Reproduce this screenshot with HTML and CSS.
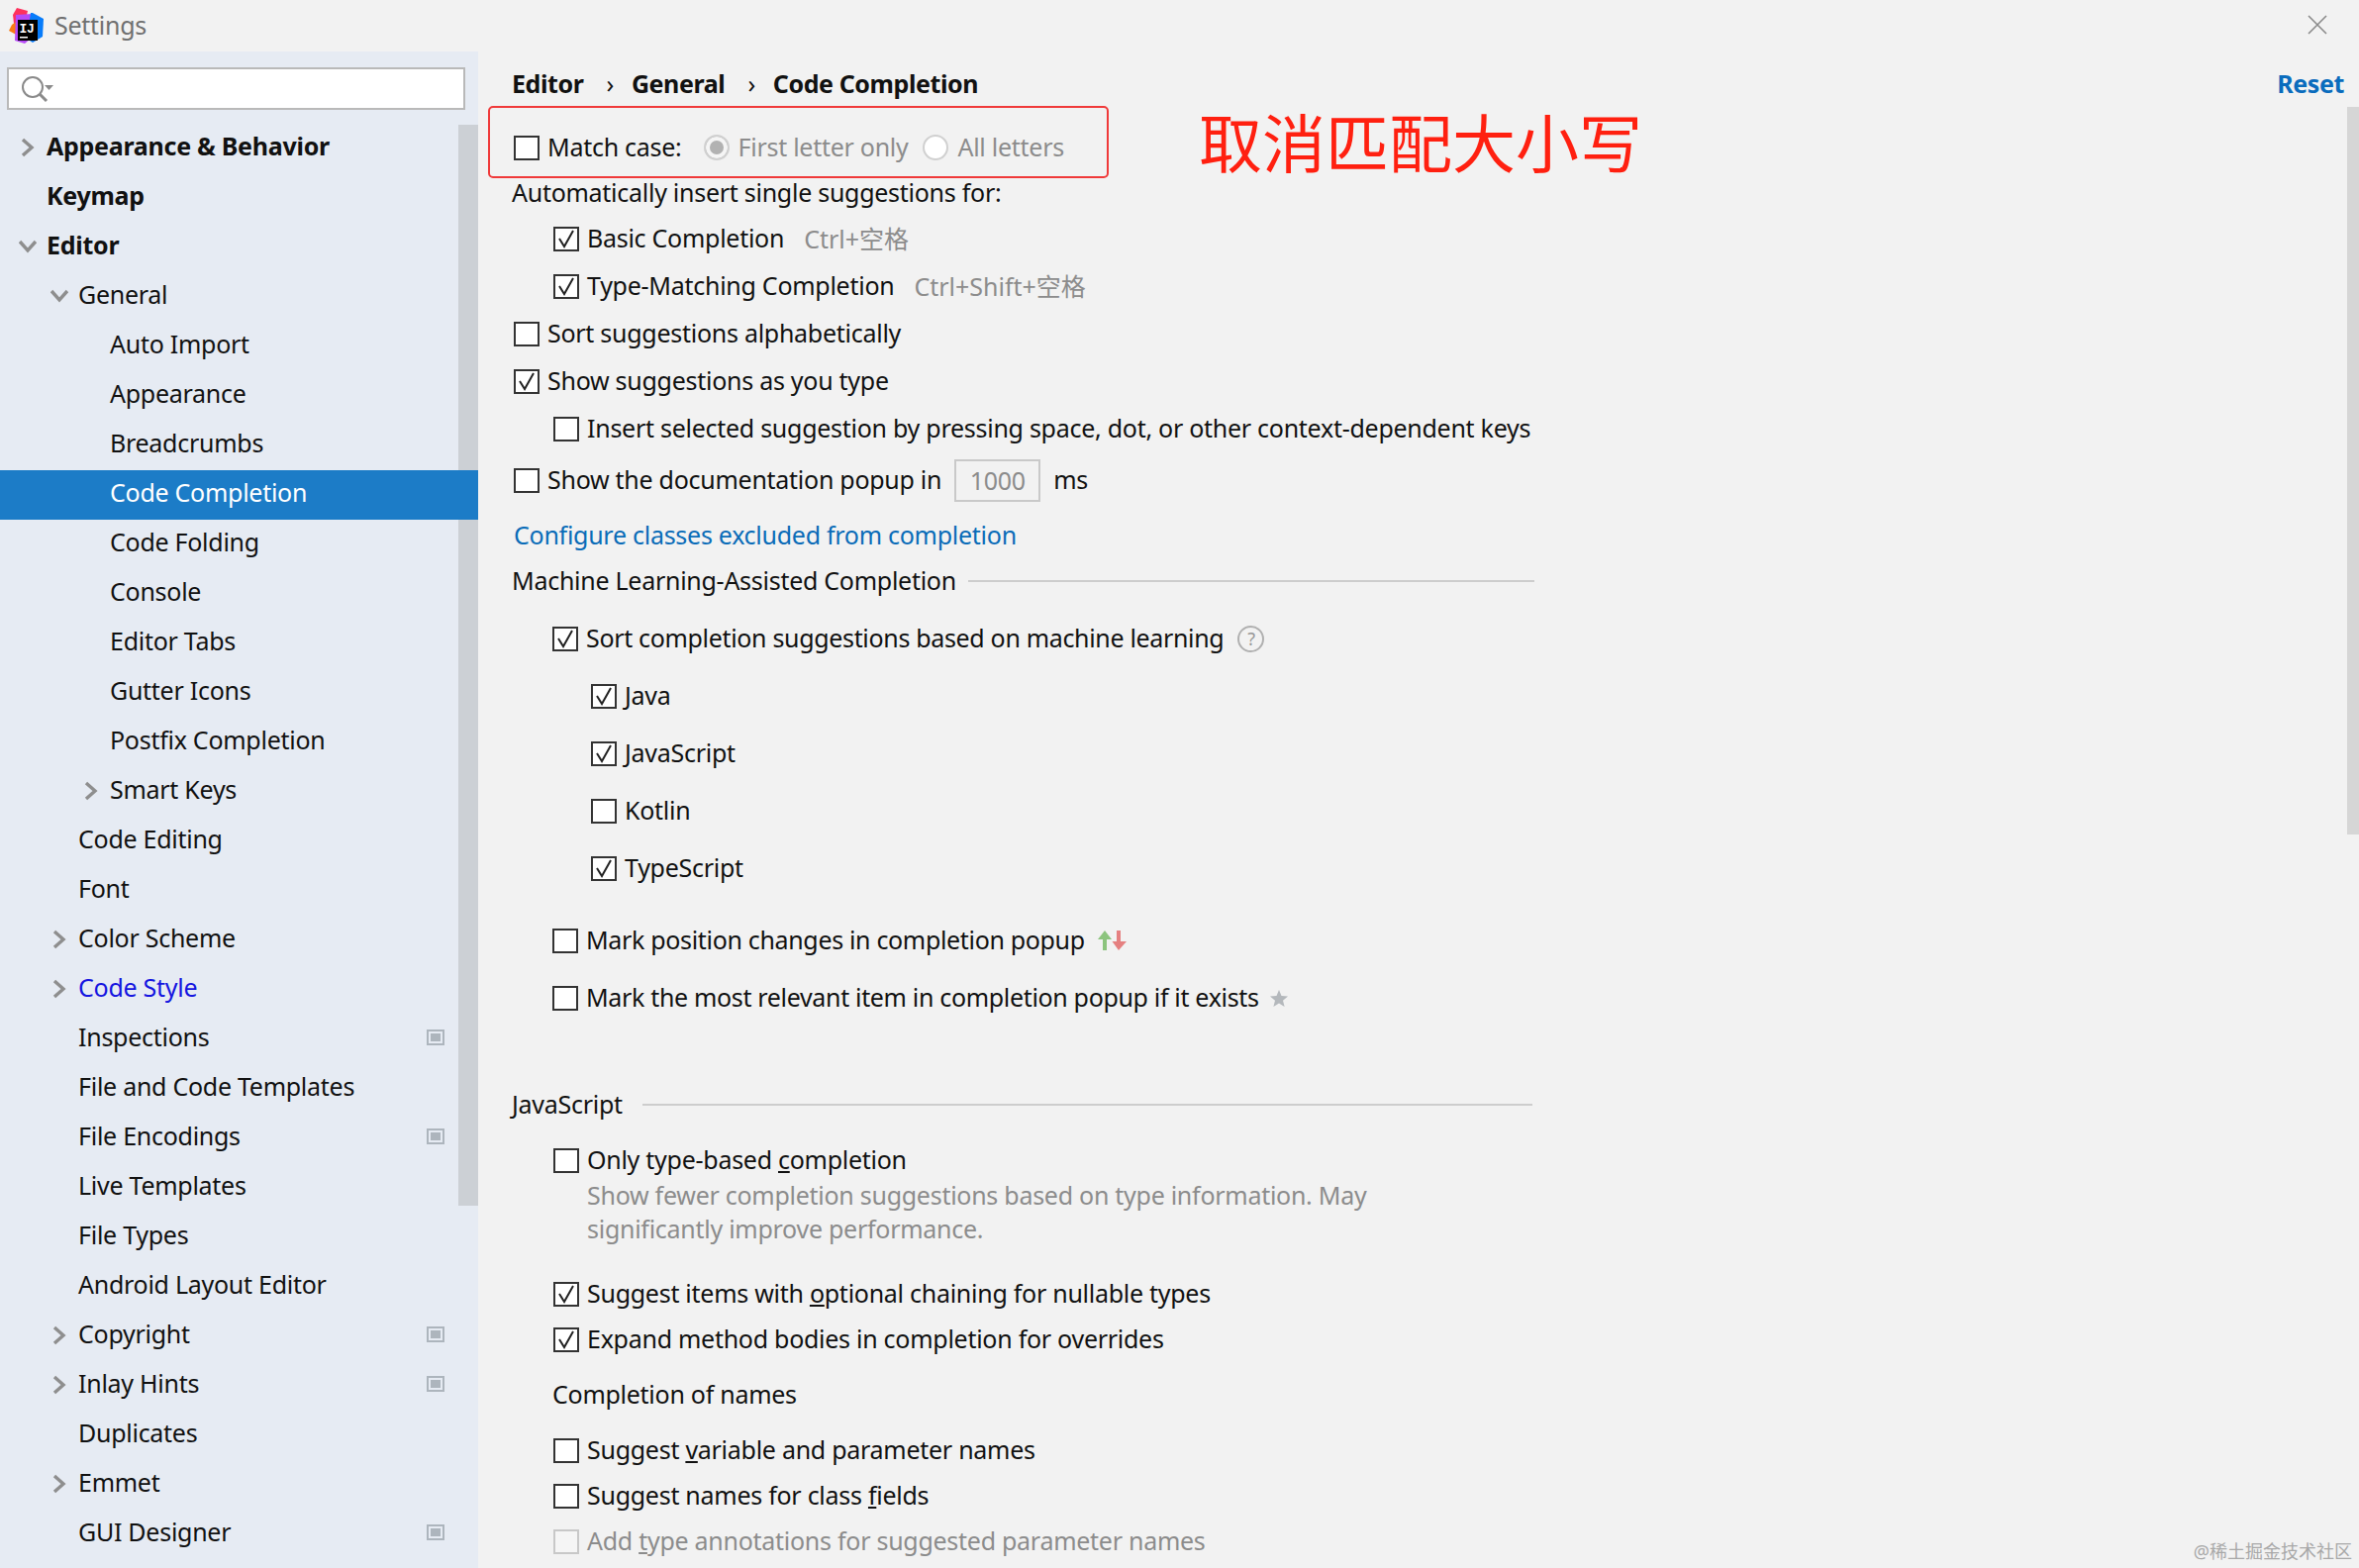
FILE: index.html
```html
<!DOCTYPE html>
<html lang="en">
<head>
  <meta charset="UTF-8">
  <title>Settings</title>
  <link rel="stylesheet" href="styles.css">
</head>
<body>

  <!-- Title bar -->
  <div class="titlebar">
    <svg class="logo" width="38" height="38" viewBox="0 0 38 38">
      <polygon points="10,9 14,2 25,5 21,22 12,26" fill="#fe315d"/>
      <polygon points="9,19 17,13 17,31 6,25" fill="#f97a12"/>
      <polygon points="13,10 30,9 34,29 22,39 12,36" fill="#b74af7" transform="translate(0,-1)"/>
      <polygon points="28,8 30,8 41,14 40,32 30,38 24,34" fill="#087cfa" transform="translate(0,-1)"/>
      <rect x="15" y="14" width="20" height="21" fill="#000"/>
      <rect x="17" y="31" width="8" height="1.5" fill="#fff"/>
      <text x="16.5" y="27" class="logo-text">IJ</text>
    </svg>
    <span class="title">Settings</span>
    <svg class="close" width="20" height="20" viewBox="0 0 20 20"><path d="M1 1L19 19M19 1L1 19" stroke="#8a8a8a" stroke-width="1.6" fill="none"/></svg>
  </div>

  <div class="layout">
    <!-- Left tree -->
    <div class="sidebar">
      <div class="search">
        <svg width="36" height="34" viewBox="0 0 36 34">
          <circle cx="14" cy="14" r="10" fill="none" stroke="#8a8a8a" stroke-width="2"/>
          <path d="M21 21L28 28" stroke="#8a8a8a" stroke-width="3"/>
          <polygon points="26,12 35,12 30.5,17" fill="#8a8a8a"/>
        </svg>
      </div>
      <div class="tree">
        <div class="node lvl0 bold"><svg class="arrow" width="14" height="20" viewBox="0 0 14 20"><path d="M2 2L11 10L2 18" class="chev"/></svg>Appearance &amp; Behavior</div>
        <div class="node lvl0 bold">Keymap</div>
        <div class="node lvl0 bold"><svg class="arrow down" width="18" height="14" viewBox="0 0 18 14"><path d="M1 2L9 11L17 2" class="chev"/></svg>Editor</div>
        <div class="node lvl1"><svg class="arrow down" width="18" height="14" viewBox="0 0 18 14"><path d="M1 2L9 11L17 2" class="chev"/></svg>General</div>
        <div class="node lvl2">Auto Import</div>
        <div class="node lvl2">Appearance</div>
        <div class="node lvl2">Breadcrumbs</div>
        <div class="node lvl2 selected">Code Completion</div>
        <div class="node lvl2">Code Folding</div>
        <div class="node lvl2">Console</div>
        <div class="node lvl2">Editor Tabs</div>
        <div class="node lvl2">Gutter Icons</div>
        <div class="node lvl2">Postfix Completion</div>
        <div class="node lvl2"><svg class="arrow" width="14" height="20" viewBox="0 0 14 20"><path d="M2 2L11 10L2 18" class="chev"/></svg>Smart Keys</div>
        <div class="node lvl1">Code Editing</div>
        <div class="node lvl1">Font</div>
        <div class="node lvl1"><svg class="arrow" width="14" height="20" viewBox="0 0 14 20"><path d="M2 2L11 10L2 18" class="chev"/></svg>Color Scheme</div>
        <div class="node lvl1 changed"><svg class="arrow" width="14" height="20" viewBox="0 0 14 20"><path d="M2 2L11 10L2 18" class="chev"/></svg>Code Style</div>
        <div class="node lvl1">Inspections<span class="scope"></span></div>
        <div class="node lvl1">File and Code Templates</div>
        <div class="node lvl1">File Encodings<span class="scope"></span></div>
        <div class="node lvl1">Live Templates</div>
        <div class="node lvl1">File Types</div>
        <div class="node lvl1">Android Layout Editor</div>
        <div class="node lvl1"><svg class="arrow" width="14" height="20" viewBox="0 0 14 20"><path d="M2 2L11 10L2 18" class="chev"/></svg>Copyright<span class="scope"></span></div>
        <div class="node lvl1"><svg class="arrow" width="14" height="20" viewBox="0 0 14 20"><path d="M2 2L11 10L2 18" class="chev"/></svg>Inlay Hints<span class="scope"></span></div>
        <div class="node lvl1">Duplicates</div>
        <div class="node lvl1"><svg class="arrow" width="14" height="20" viewBox="0 0 14 20"><path d="M2 2L11 10L2 18" class="chev"/></svg>Emmet</div>
        <div class="node lvl1">GUI Designer<span class="scope"></span></div>
      </div>
      <div class="tree-scroll"></div>
    </div>

    <!-- Right panel -->
    <div class="content">
      <div class="crumbs">
        <span>Editor</span><span class="sep">›</span><span>General</span><span class="sep">›</span><span>Code Completion</span>
        <a class="reset" href="#">Reset</a>
      </div>

      <div class="row"><span class="cb"></span>Match case:
        <span class="radio on"></span><span class="muted">First letter only</span>
        <span class="radio second"></span><span class="muted">All letters</span>
      </div>
      <div class="row plain short">Automatically insert single suggestions for:</div>
      <div class="row ind1"><span class="cb"><svg viewBox="0 0 22 21"><path d="M4 10L9 18L18 2"/></svg></span>Basic Completion<span class="shortcut">Ctrl+空格</span></div>
      <div class="row ind1"><span class="cb"><svg viewBox="0 0 22 21"><path d="M4 10L9 18L18 2"/></svg></span>Type-Matching Completion<span class="shortcut">Ctrl+Shift+空格</span></div>
      <div class="row"><span class="cb"></span>Sort suggestions alphabetically</div>
      <div class="row"><span class="cb"><svg viewBox="0 0 22 21"><path d="M4 10L9 18L18 2"/></svg></span>Show suggestions as you type</div>
      <div class="row ind1"><span class="cb"></span>Insert selected suggestion by pressing space, dot, or other context-dependent keys</div>
      <div class="row tall"><span class="cb"></span>Show the documentation popup in<span class="num">1000</span>ms</div>
      <div class="row tall link-row"><a href="#">Configure classes excluded from completion</a></div>

      <div class="section">Machine Learning-Assisted Completion</div>
      <div class="ml">
        <div class="row ml-row ml1"><span class="cb"><svg viewBox="0 0 22 21"><path d="M4 10L9 18L18 2"/></svg></span>Sort completion suggestions based on machine learning<span class="help">?</span></div>
        <div class="row ml-row ml2"><span class="cb"><svg viewBox="0 0 22 21"><path d="M4 10L9 18L18 2"/></svg></span>Java</div>
        <div class="row ml-row ml2"><span class="cb"><svg viewBox="0 0 22 21"><path d="M4 10L9 18L18 2"/></svg></span>JavaScript</div>
        <div class="row ml-row ml2"><span class="cb"></span>Kotlin</div>
        <div class="row ml-row ml2"><span class="cb"><svg viewBox="0 0 22 21"><path d="M4 10L9 18L18 2"/></svg></span>TypeScript</div>
        <div class="row ml-row ml1 gap-top"><span class="cb"></span>Mark position changes in completion popup
          <svg class="updown" width="32" height="22" viewBox="0 0 32 22">
            <path d="M8 1L15 10H10V21H6V10H1Z" fill="#8cc47e"/>
            <path d="M22 21L15.5 12H20V1H24V12H30Z" fill="#e58080"/>
          </svg>
        </div>
        <div class="row ml-row ml1"><span class="cb"></span>Mark the most relevant item in completion popup if it exists
          <svg class="star" width="18" height="17" viewBox="0 0 18 17"><polygon points="9,0 11.5,6 18,6.5 13,10.7 14.6,17 9,13.6 3.4,17 5,10.7 0,6.5 6.5,6" fill="#b4b8bc"/></svg>
        </div>
      </div>

      <div class="section js">JavaScript</div>
      <div class="row ind1 only"><span class="cb"></span>Only type-based&nbsp;<u>c</u>ompletion</div>
      <div class="desc">Show fewer completion suggestions based on type information. May<br>significantly improve performance.</div>
      <div class="row ind1 mid first"><span class="cb"><svg viewBox="0 0 22 21"><path d="M4 10L9 18L18 2"/></svg></span>Suggest items with&nbsp;<u>o</u>ptional chaining for nullable types</div>
      <div class="row ind1 mid"><span class="cb"><svg viewBox="0 0 22 21"><path d="M4 10L9 18L18 2"/></svg></span>Expand method bodies in completion for overrides</div>
      <div class="row mid names">Completion of names</div>
      <div class="row ind1 mid"><span class="cb"></span>Suggest&nbsp;<u>v</u>ariable and parameter names</div>
      <div class="row ind1 mid"><span class="cb"></span>Suggest names for class&nbsp;<u>f</u>ields</div>
      <div class="row ind1 mid off"><span class="cb"></span>Add&nbsp;<u>t</u>ype annotations for suggested parameter names</div>
      <div class="content-scroll"></div>
    </div>
  </div>

  <!-- Annotation and watermark on top of the screenshot -->
  <div class="note-box"></div>
  <div class="note-text">取消匹配大小写</div>
  <div class="watermark">@稀土掘金技术社区</div>

</body>
</html>
```

FILE: styles.css
```css
* {
  box-sizing: border-box;
  font-family: "Noto Sans", "Noto Sans CJK SC", sans-serif;
}
html, body {
  height: 100%;
}
body {
  margin: 0;
  background: #f2f2f2;
  color: #111;
  font-size: 25px;
  letter-spacing: -0.27px;
  overflow: hidden;
  position: relative;
}
a {
  text-decoration: none;
}

/* Title bar */
.titlebar {
  height: 52px;
  display: flex;
  align-items: center;
  padding: 0 32px 2px 3px;
}
.logo {
  margin-right: 14px;
  overflow: visible;
}
.logo-text {
  font-size: 13px;
  font-weight: 700;
  fill: #fff;
  font-family: "Liberation Mono", monospace;
}
.title {
  color: #707070;
}
.close {
  margin-left: auto;
}

.layout {
  display: flex;
  height: 1532px;
}

/* Sidebar */
.sidebar {
  width: 483px;
  flex: none;
  background: #e6ebf3;
  position: relative;
  overflow: hidden;
}
.search {
  margin: 16px 13px 0 7px;
  height: 43px;
  background: #fff;
  border: 2px solid #b9b9b9;
  padding: 4px 0 0 10px;
}
.search svg {
  display: block;
}
.tree {
  margin-top: 14px;
  position: relative;
  z-index: 1;
}
.node {
  height: 50px;
  display: flex;
  align-items: center;
  white-space: nowrap;
  position: relative;
  padding-bottom: 6px;
}
.lvl0 { padding-left: 47px; }
.lvl1 { padding-left: 79px; }
.lvl2 { padding-left: 111px; }
.bold { font-weight: 700; }
.selected {
  background: #1c7cc7;
  color: #fff;
}
.changed { color: #1515e0; }
.arrow {
  flex: none;
  margin: 3px 12px 0 -26px;
}
.arrow.down {
  margin: 3px 10px 0 -28px;
}
.chev {
  fill: none;
  stroke: #8e8e8e;
  stroke-width: 3.4;
}
.scope {
  position: absolute;
  left: 431px;
  top: 15px;
  width: 18px;
  height: 16px;
  background: #adb5bd;
  border: 2px solid #adb5bd;
  box-shadow: inset 0 0 0 2px #e6ebf3;
}
.tree-scroll {
  position: absolute;
  left: 463px;
  top: 74px;
  width: 20px;
  height: 1092px;
  background: #ccd0d5;
}

/* Right panel */
.content {
  flex: 1;
  padding: 9px 0 0 517px;
  margin-left: -483px;
  position: relative;
  overflow: hidden;
}
.crumbs {
  height: 46px;
  margin-bottom: 18px;
  display: flex;
  align-items: center;
  font-weight: 700;
  letter-spacing: -0.4px;
  white-space: nowrap;
}
.sep {
  font-weight: 400;
  margin: 0 18px 0 23px;
}
.reset {
  margin-left: auto;
  margin-right: 15px;
  color: #0a6cbd;
  font-weight: 700;
}
.row {
  height: 48px;
  display: flex;
  align-items: center;
  white-space: nowrap;
  padding-left: 2px;
  padding-bottom: 3px;
}
.row.plain { padding-left: 0; }
.row.short { height: 44px; }
.row.tall { height: 56px; }
.row.ind1 { padding-left: 42px; }
.cb {
  width: 26px;
  height: 25px;
  flex: none;
  border: 2px solid #333;
  background: #fff;
  margin: 3px 8px 0 0;
}
.cb svg {
  display: block;
  width: 22px;
  height: 21px;
  fill: none;
  stroke: #222;
  stroke-width: 2;
}
.off { color: #8c8c8c; }
.off .cb {
  border-color: #c8c8c8;
  background: #f5f5f5;
}
.radio {
  width: 26px;
  height: 26px;
  flex: none;
  border-radius: 50%;
  border: 2px solid #d0d0d0;
  background: #fff;
  margin: 3px 9px 0 22px;
}
.radio.on {
  background: #b2b2b2;
  box-shadow: inset 0 0 0 4px #f5f5f5;
}
.radio.second {
  margin-left: 15px;
}
.muted { color: #8c8c8c; }
.shortcut {
  color: #8c8c8c;
  letter-spacing: 0;
  margin-left: 20px;
}
.num {
  width: 87px;
  height: 43px;
  margin: 3px 13px 0;
  border: 2px solid #c9c9c9;
  color: #8c8c8c;
  display: flex;
  align-items: center;
  justify-content: center;
}
.link-row a { color: #0a6cb8; }

/* Titled separators */
.section {
  height: 36px;
  display: flex;
  align-items: center;
  gap: 12px;
  white-space: nowrap;
  padding-bottom: 3px;
}
.section::after {
  content: "";
  flex: 1;
  max-width: 572px;
  height: 2px;
  margin-top: 3px;
  background: #cdcdcd;
}
.section.js {
  margin-top: 61px;
  margin-bottom: 19px;
  gap: 20px;
}
.section.js::after {
  max-width: 899px;
}
.ml { margin-top: 11px; }
.row.ml-row { height: 58px; }
.ml1 {
  padding-left: 41px;
  letter-spacing: -0.33px;
}
.ml2 { padding-left: 80px; }
.gap-top { margin-top: 15px; }
.help {
  width: 27px;
  height: 27px;
  border: 2px solid #b0b0b0;
  border-radius: 50%;
  color: #999;
  font-size: 18px;
  margin: 3px 0 0 14px;
  display: flex;
  align-items: center;
  justify-content: center;
}
.updown { margin: 3px 0 0 12px; }
.star { margin: 3px 0 0 11px; }

/* JavaScript block */
.row.only { height: 38px; }
.desc {
  padding-left: 76px;
  color: #8c8c8c;
  line-height: 34px;
  margin-top: -1px;
  margin-bottom: 1px;
}
.row.mid { height: 46px; }
.row.first { margin-top: 26px; }
.row.names {
  margin: 10px 0;
  padding-left: 41px;
}
.content-scroll {
  position: absolute;
  right: 0;
  top: 56px;
  width: 12px;
  height: 735px;
  background: #d6d6d6;
}

/* Overlays */
.note-box {
  position: absolute;
  left: 493px;
  top: 107px;
  width: 627px;
  height: 73px;
  border: 2px solid #f03a3a;
  border-radius: 5px;
}
.note-text {
  position: absolute;
  left: 1211px;
  top: 100px;
  font-size: 64px;
  letter-spacing: 0;
  line-height: 90px;
  color: #ff2010;
  white-space: nowrap;
}
.watermark {
  position: absolute;
  right: 7px;
  bottom: 5px;
  font-size: 18px;
  letter-spacing: 0;
  color: #a8a8a8;
}
```
